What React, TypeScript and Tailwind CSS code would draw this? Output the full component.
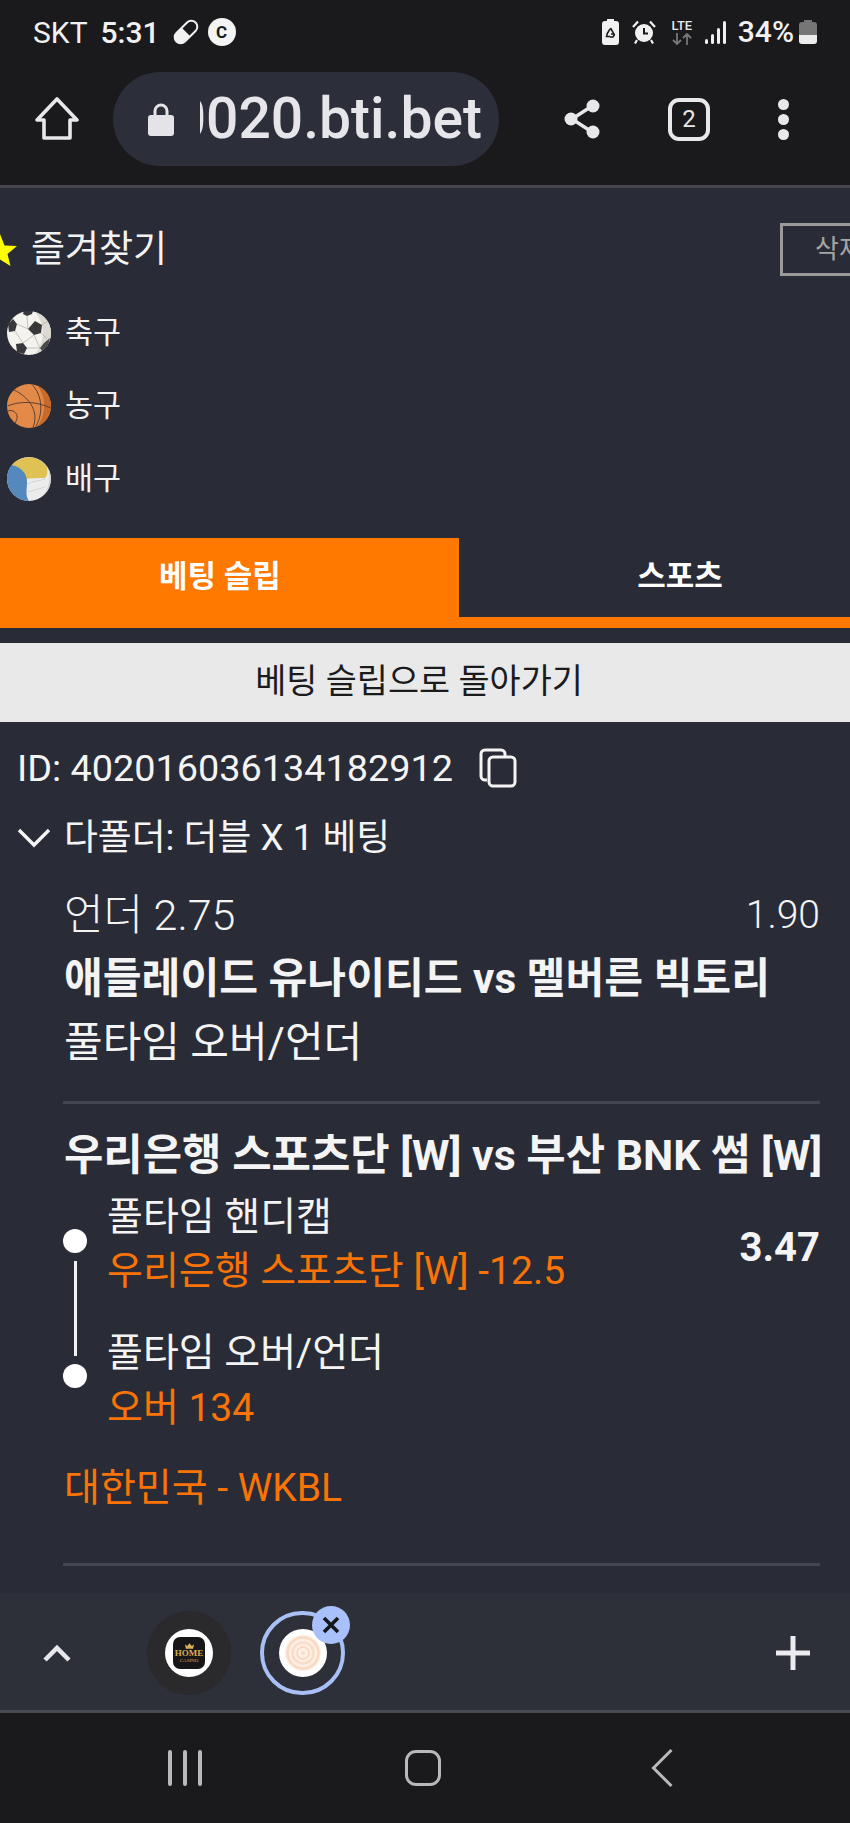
import React from "react";

function Soccer() {
  return (
    <svg viewBox="0 0 44 44" className="w-[44px] h-[44px] shrink-0">
      <circle cx="22" cy="22" r="22" fill="#f5f3ee" />
      <path d="M28 1 A22 22 0 0 1 44 22 A22 22 0 0 1 28 43 A32 32 0 0 0 28 1Z" fill="#dcd9d2" />
      <polygon points="28,10 35,14 34,22 27,24 21,18" fill="#38383b" />
      <polygon points="1,13 6,8 10,13 8,20 2,21" fill="#38383b" />
      <polygon points="9,33 16,32 20,37 17,43 10,41" fill="#38383b" />
      <polygon points="37,32 43,27 41,35 35,40 33,37" fill="#4a4a4c" />
      <polygon points="17,0 26,0 25,3 20,5 16,3" fill="#38383b" />
      <path d="M10 13 L21 18 M8 20 L16 32 M27 24 L33 37 M20 37 L33 37 M21 18 L20 5 M35 14 L41 10 M34 22 L40 28 M27 24 L16 32" stroke="#a3a19c" strokeWidth="0.6" fill="none" />
    </svg>
  );
}

function Basketball() {
  return (
    <svg viewBox="0 0 44 44" className="w-[44px] h-[44px] shrink-0">
      <circle cx="22" cy="22" r="22" fill="#e48a48" />
      <path d="M30 1.5 A22 22 0 0 1 30 42.5 A30 30 0 0 0 37 22 A30 30 0 0 0 30 1.5Z" fill="#c96a2a" />
      <path d="M0.5 22 C12 17 30 17 43.5 24 M7 6 C20 12 33 26 26 43.5 M25 0.5 C36 12 36 30 29 42 M1 27 C6 25 14 30 8 39" stroke="#5c4035" strokeWidth="1" fill="none" />
    </svg>
  );
}

function Volleyball() {
  return (
    <svg viewBox="0 0 44 44" className="w-[44px] h-[44px] shrink-0">
      <circle cx="22" cy="22" r="22" fill="#ececec" />
      <path d="M34 40 A22 22 0 0 0 41 11 C44 22 42 33 34 40Z" fill="#d3d3d3" />
      <path d="M5 8 A22 22 0 0 1 40 10 C41 16 40 20 38 21 C30 21 24 21 19 22 C16 14 10 10 5 8Z" fill="#dfc254" />
      <path d="M5 8 C14 10 20 16 20 25 C20 32 18 39 22 44 A22 22 0 0 1 0 22 C0 16 2 11 5 8Z" fill="#5588bd" />
      <path d="M20 27 C26 24 32 24 38 22 M21 35 C27 33 32 32 38 30" stroke="#c9c9c9" strokeWidth="0.7" fill="none" />
    </svg>
  );
}

function SportRow({ icon, label }: { icon: React.ReactNode; label: string }) {
  return (
    <div className="h-[73px] flex items-center pl-[7px]">
      {icon}
      <span className="ml-[14px] text-[30.5px] leading-[50px] text-[#f2f2f2]">{label}</span>
    </div>
  );
}

function StatusBar() {
  return (
    <div className="h-[64px] flex items-center justify-between pl-[33px] pr-[33px] text-[#f1f1f1] text-[30px]">
      <div className="flex items-center">
        <span>SKT</span>
        <span className="ml-[13px] font-medium">5:31</span>
        <svg viewBox="0 0 28 26" className="ml-[12px] w-[28px] h-[26px]">
          <g transform="rotate(-45 14 13)">
            <rect x="0.5" y="7" width="27" height="12" rx="6" fill="none" stroke="#f1f1f1" strokeWidth="2" />
            <path d="M6.5 7 H14 V19 H6.5 A6 6 0 0 1 6.5 7Z" fill="#f1f1f1" />
          </g>
        </svg>
        <span className="ml-[8px] w-[28px] h-[28px] rounded-full bg-[#f4f4f4] flex items-center justify-center text-[#1a1a1c] text-[17px] leading-none font-bold">
          C
        </span>
      </div>
      <div className="flex items-center">
        <svg viewBox="0 0 19 26" className="w-[19px] h-[26px]">
          <path d="M6 0 H13 V2 H15 A3 3 0 0 1 18 5 V23 A3 3 0 0 1 15 26 H4 A3 3 0 0 1 1 23 V5 A3 3 0 0 1 4 2 H6Z" fill="#f1f1f1" />
          <path d="M9.5 9 L13 15 H10 M6 15 L9 10 M6.5 14 L5.5 17.5 H9 M13.5 15.5 L12 18 H9" stroke="#1a1a1c" strokeWidth="1.5" fill="none" />
        </svg>
        <svg viewBox="0 0 24 24" className="ml-[12px] w-[24px] h-[24px]">
          <circle cx="12" cy="13" r="9" fill="#f1f1f1" />
          <path d="M12 8 V13.5 H16" stroke="#1a1a1c" strokeWidth="2" fill="none" />
          <path d="M1 7 L6 1.5 M23 7 L18 1.5 M5 20 L3 23.5 M19 20 L21 23.5" stroke="#f1f1f1" strokeWidth="2.2" />
        </svg>
        <div className="ml-[12px] w-[28px] flex flex-col items-center text-[#e8e8e8]">
          <span className="text-[13px] leading-[13px] font-medium">LTE</span>
          <svg viewBox="0 0 24 12" className="w-[24px] h-[12px] mt-[1px]">
            <path d="M7 0 V11 M3 7 L7 11 L11 7 M17 12 V1 M13 5 L17 1 L21 5" stroke="#777" strokeWidth="1.8" fill="none" />
          </svg>
        </div>
        <svg viewBox="0 0 22 24" className="ml-[9px] w-[22px] h-[24px]">
          <rect x="0" y="19" width="3" height="5" rx="1.5" fill="#f1f1f1" />
          <rect x="6" y="14" width="3" height="10" rx="1.5" fill="#f1f1f1" />
          <rect x="12" y="8" width="3" height="16" rx="1.5" fill="#f1f1f1" />
          <rect x="18" y="1" width="3" height="23" rx="1.5" fill="#f1f1f1" />
        </svg>
        <span className="ml-[11px] font-medium leading-none">34%</span>
        <svg viewBox="0 0 18 24" className="ml-[5px] w-[18px] h-[24px]">
          <path d="M5 0 H13 V2 H15 A3 3 0 0 1 18 5 V15 H0 V5 A3 3 0 0 1 3 2 H5Z" fill="#767676" />
          <path d="M0 15 H18 V21 A3 3 0 0 1 15 24 H3 A3 3 0 0 1 0 21Z" fill="#ededed" />
        </svg>
      </div>
    </div>
  );
}

function Toolbar() {
  return (
    <div className="mt-[8px] h-[94px] flex items-center pl-[35px]">
      <svg viewBox="0 0 44 44" className="w-[44px] h-[44px] shrink-0">
        <path d="M22 2 L42 23 H35 V41 H9 V23 H2 Z" fill="none" stroke="#e8e8ec" strokeWidth="3.6" strokeLinejoin="round" />
      </svg>
      <div className="ml-[34px] w-[386px] h-[94px] rounded-[47px] bg-[#2c2f3a] flex items-center pl-[35px] overflow-hidden shrink-0">
        <svg viewBox="0 0 26 34" className="w-[26px] h-[34px] shrink-0">
          <path d="M7 14 V9 A6 6 0 0 1 19 9 V14" fill="none" stroke="#e4e4e8" strokeWidth="3" />
          <rect x="0" y="13" width="26" height="21" rx="3" fill="#e4e4e8" />
        </svg>
        <div className="ml-[26px] w-[282px] overflow-hidden flex justify-end shrink-0">
          <span className="text-[57px] leading-[70px] font-medium text-[#e6e6ea] whitespace-nowrap">0020.bti.bet</span>
        </div>
      </div>
      <svg viewBox="0 0 36 40" className="ml-[65px] w-[36px] h-[40px] shrink-0">
        <path d="M28 7 L8 20 L28 33" stroke="#e8e8ec" strokeWidth="3.4" fill="none" />
        <circle cx="29" cy="7" r="6.5" fill="#e8e8ec" />
        <circle cx="7" cy="20" r="6.5" fill="#e8e8ec" />
        <circle cx="29" cy="33" r="6.5" fill="#e8e8ec" />
      </svg>
      <div className="ml-[68px] w-[42px] h-[43px] rounded-[11px] border-[4px] border-[#e8e8ec] flex items-center justify-center text-[#e8e8ec] text-[24px] leading-none shrink-0">
        2
      </div>
      <div className="ml-[68px] flex flex-col gap-[4px] shrink-0">
        <span className="w-[11px] h-[11px] rounded-full bg-[#e8e8ec]" />
        <span className="w-[11px] h-[11px] rounded-full bg-[#e8e8ec]" />
        <span className="w-[11px] h-[11px] rounded-full bg-[#e8e8ec]" />
      </div>
    </div>
  );
}

function Favorites() {
  return (
    <div className="pt-[29px]">
      <div className="h-[64px] flex items-center justify-between">
        <div className="flex items-center pt-[2px]">
          <svg viewBox="0 0 34 32" className="-ml-[17px] w-[34px] h-[32px]">
            <polygon points="17,0 21.5,11.5 34,12 24.5,20 27.5,32 17,25.5 6.5,32 9.5,20 0,12 12.5,11.5" fill="#ffff00" />
          </svg>
          <span className="ml-[14px] text-[37px] leading-[50px] text-[#f2f2f2]">즐겨찾기</span>
        </div>
        <div className="w-[70px] h-[53px] border-[3px] border-r-0 border-[#9a9a9a] overflow-hidden pl-[32px] flex items-center">
          <span className="text-[26px] leading-none text-[#a5a5a5] whitespace-nowrap">삭제</span>
        </div>
      </div>
      <div className="mt-[15px]">
        <SportRow icon={<Soccer />} label="축구" />
        <SportRow icon={<Basketball />} label="농구" />
        <SportRow icon={<Volleyball />} label="배구" />
      </div>
    </div>
  );
}

function Tabs() {
  return (
    <div className="mt-[23px]">
      <div className="-ml-[19px] w-[920px] h-[79px] flex">
        <div className="w-[478px] bg-[#ff7800] flex items-center justify-center text-white text-[31px] font-bold">
          베팅 슬립
        </div>
        <div className="w-[442px] flex items-center justify-center text-white text-[31px] font-bold">스포츠</div>
      </div>
      <div className="h-[11px] bg-[#ff7800]" />
      <div className="mt-[15px] h-[79px] bg-[#e9e9e9] flex items-center justify-center pr-[12px] text-[#1b1b1d] text-[33.8px]">
        베팅 슬립으로 돌아가기
      </div>
    </div>
  );
}

function Bet() {
  return (
    <div className="pl-[64px] pr-[30px] text-[#f4f4f4]">
      <div className="mt-[27px] h-[50px] flex items-center justify-between">
        <span className="text-[43px] font-light">언더 2.75</span>
        <span className="text-[39px] font-light">1.90</span>
      </div>
      <div className="mt-[14px] h-[50px] flex items-center text-[42.2px] font-bold whitespace-nowrap">
        애들레이드 유나이티드 vs 멜버른 빅토리
      </div>
      <div className="mt-[13px] h-[50px] flex items-center text-[42px]">풀타임 오버/언더</div>
      <div className="-ml-[1px] mt-[34px] h-[3px] bg-[#43454f]" />
      <div className="mt-[26px] h-[50px] flex items-center text-[42.8px] font-bold whitespace-nowrap">
        우리은행 스포츠단 [W] vs 부산 BNK 썸 [W]
      </div>
      <div className="mt-[12px] flex">
        <div className="-ml-[1px] mt-[37px] w-[24px] flex flex-col items-center shrink-0">
          <span className="w-[24px] h-[24px] rounded-full bg-white" />
          <span className="mt-[8px] w-[3px] h-[95px] bg-[#f2f2f2]" />
          <span className="mt-[8px] w-[24px] h-[24px] rounded-full bg-white" />
        </div>
        <div className="ml-[20px] flex-1 text-[39px] whitespace-nowrap">
          <div className="h-[50px] flex items-center">풀타임 핸디캡</div>
          <div className="mt-[4px] h-[50px] flex items-center text-[#f97306]">우리은행 스포츠단 [W] -12.5</div>
          <div className="mt-[32px] h-[50px] flex items-center">풀타임 오버/언더</div>
          <div className="mt-[5px] h-[50px] flex items-center text-[#f97306]">오버 134</div>
        </div>
        <div className="mt-[31px] h-[50px] flex items-center text-[40px] font-bold">3.47</div>
      </div>
      <div className="mt-[30px] h-[50px] flex items-center text-[39px] text-[#f97306]">대한민국 - WKBL</div>
      <div className="-ml-[1px] mt-[50px] h-[3px] bg-[#43454f]" />
    </div>
  );
}

function BottomTabs() {
  return (
    <div className="h-[117px] shrink-0 bg-[#2d2f39] flex items-center pl-[43px] pr-[40px] pt-[3px]">
      <svg viewBox="0 0 28 18" className="w-[28px] h-[18px] shrink-0">
        <path d="M2 16 L14 4 L26 16" stroke="#e8e8ec" strokeWidth="4.5" fill="none" />
      </svg>
      <div className="ml-[76px] w-[84px] h-[84px] rounded-full bg-[#2a2a2c] flex items-center justify-center shrink-0">
        <div className="w-[48px] h-[48px] rounded-full bg-white flex items-center justify-center">
          <div className="w-[32px] h-[32px] rounded-[7px] bg-[#17171a] flex flex-col items-center justify-center text-[#d9ae55] font-['Liberation_Serif',serif]">
            <svg viewBox="0 0 10 6" className="w-[9px] h-[6px]">
              <path d="M0 1 L2.5 3 L5 0 L7.5 3 L10 1 L9 6 H1Z" fill="#d9ae55" />
            </svg>
            <span className="text-[9px] leading-[9px] font-bold">HOME</span>
            <span className="text-[5px] leading-[6px]">CASINO</span>
          </div>
        </div>
      </div>
      <div className="ml-[29px] relative w-[85px] h-[84px] rounded-full border-[4px] border-[#a8c0f5] flex items-center justify-center shrink-0">
        <svg viewBox="0 0 48 48" className="w-[48px] h-[48px]">
          <circle cx="24" cy="24" r="24" fill="#ffffff" />
          <circle cx="24" cy="24" r="18" fill="#fdf0e6" />
          <circle cx="24" cy="24" r="15.5" fill="none" stroke="#fbd8bf" strokeWidth="2.5" />
          <circle cx="24" cy="24" r="10.5" fill="none" stroke="#fbdcc6" strokeWidth="2.5" />
          <circle cx="24" cy="24" r="6" fill="none" stroke="#fad3b8" strokeWidth="1.5" />
          <circle cx="24" cy="24" r="2" fill="#fbdcc6" />
        </svg>
        <div className="absolute -top-[9px] -right-[9px] w-[38px] h-[38px] rounded-full bg-[#a9c1fb] flex items-center justify-center">
          <svg viewBox="0 0 20 20" className="w-[20px] h-[20px]">
            <path d="M3 3 L17 17 M17 3 L3 17" stroke="#16171c" strokeWidth="3.6" />
          </svg>
        </div>
      </div>
      <svg viewBox="0 0 34 34" className="ml-auto w-[34px] h-[34px] shrink-0">
        <path d="M17 0 V34 M0 17 H34" stroke="#ececf0" strokeWidth="5" />
      </svg>
    </div>
  );
}

function NavBar() {
  return (
    <div className="h-[113px] shrink-0 bg-[#1a1a1c] border-t-[3px] border-[#4a4a52] flex items-center pl-[168px]">
      <div className="flex gap-[11px]">
        <span className="w-[4px] h-[36px] rounded-[2px] bg-[#b9b9b9]" />
        <span className="w-[4px] h-[36px] rounded-[2px] bg-[#b9b9b9]" />
        <span className="w-[4px] h-[36px] rounded-[2px] bg-[#b9b9b9]" />
      </div>
      <div className="ml-[203px] w-[36px] h-[36px] rounded-[11px] border-[3px] border-[#b9b9b9]" />
      <svg viewBox="0 0 22 38" className="ml-[210px] w-[22px] h-[38px]">
        <path d="M20.5 1 L2.5 19 L20.5 37" stroke="#b9b9b9" strokeWidth="3" fill="none" />
      </svg>
    </div>
  );
}

export default function App() {
  return (
    <div className="w-[850px] h-[1823px] flex flex-col overflow-hidden bg-[#292c36] font-['Roboto','Noto_Sans_CJK_KR',sans-serif]">
      <div className="h-[188px] shrink-0 bg-[#1a1a1c] border-b-[3px] border-[#45464f]">
        <StatusBar />
        <Toolbar />
      </div>
      <div className="flex-1 min-h-0 overflow-hidden">
        <Favorites />
        <Tabs />
        <div className="mt-[21px] pl-[17px] h-[50px] flex items-center text-[37.8px] text-[#f4f4f4]">
          <span>ID: 402016036134182912</span>
          <svg viewBox="0 0 38 40" className="ml-[26px] w-[38px] h-[40px]">
            <path d="M8 32 H6 A4 4 0 0 1 2 28 V6 A4 4 0 0 1 6 2 H22 A4 4 0 0 1 26 6 V8" fill="none" stroke="#f4f4f4" strokeWidth="3" />
            <rect x="10" y="9" width="26" height="29" rx="4" fill="none" stroke="#f4f4f4" strokeWidth="3" />
          </svg>
        </div>
        <div className="mt-[20px] pl-[17px] h-[50px] flex items-center text-[36.8px] text-[#f4f4f4]">
          <svg viewBox="0 0 34 20" className="w-[34px] h-[20px]">
            <path d="M2 2 L17 17 L32 2" stroke="#f4f4f4" strokeWidth="3.4" fill="none" />
          </svg>
          <span className="ml-[13px]">다폴더: 더블 X 1 베팅</span>
        </div>
        <Bet />
      </div>
      <BottomTabs />
      <NavBar />
    </div>
  );
}
